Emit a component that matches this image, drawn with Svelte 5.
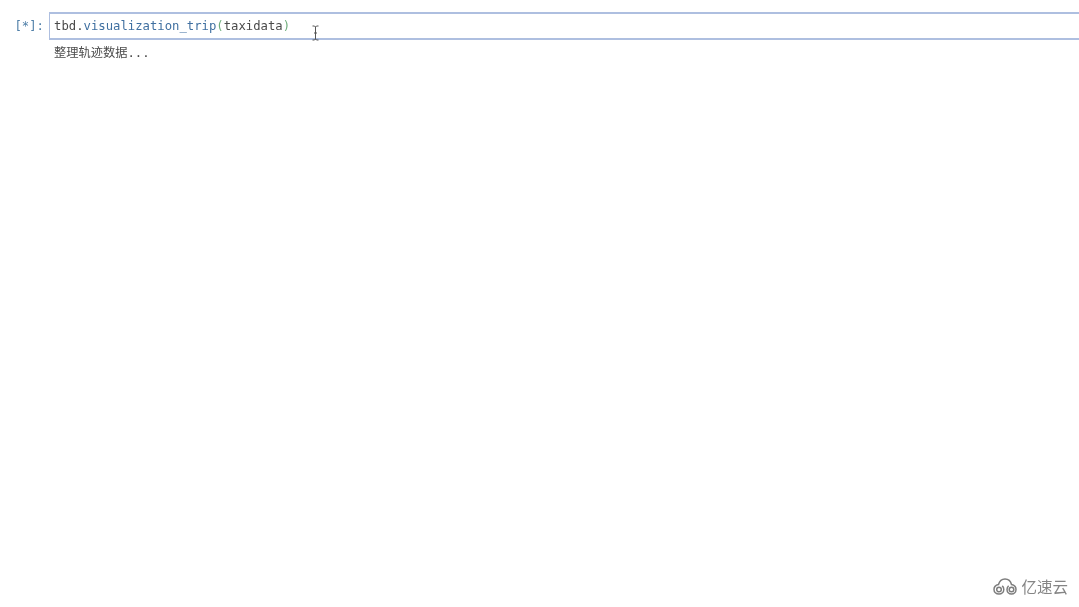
<script>
  const output = '整理轨迹数据...';
</script>

<div class="page">
  <div class="cell">
    <div class="prompt">[*]:</div>
    <div class="input">
      <code><span class="plain">tbd</span><span class="plain">.</span><span class="fn">visualization_trip</span><span class="paren">(</span><span class="plain">taxidata</span><span class="paren">)</span></code>
      <svg class="cursor" width="9" height="16" viewBox="0 0 9 16" aria-hidden="true">
        <path d="M1.5 1h2l1 1 1-1h2M4.5 2v12M1.5 15h2l1-1 1 1h2M3 8h3" fill="none" stroke="#555" stroke-width="1"/>
      </svg>
    </div>
  </div>
  <div class="output">{output}</div>

  <footer class="mark">
    <svg width="24" height="17" viewBox="0 0 24 17" aria-hidden="true">
      <g fill="none" stroke="#7d7d7d" stroke-width="1.500">
        <path d="M6 16C3 16 1 14 1 11.500 1 9 3 7 5.500 6.500 6.500 3 9 1 12 1c3.500 0 5.800 2.500 6.500 5.500 2.500.5 4.500 2.500 4.500 5 0 2.500-2 4.500-4.500 4.500-2.600 0-4.500-2-4.500-4.500 0-1.500.6-2.800 1.600-3.700"/>
        <path d="M6 16c2.700 0 4.800-2 4.800-4.500 0-1.400-.6-2.700-1.600-3.600"/>
        <circle cx="6" cy="11.500" r="2.300"/>
        <circle cx="18.500" cy="11.500" r="2.300"/>
      </g>
    </svg>
    <span>亿速云</span>
  </footer>
</div>

<style>
  :global(body) {
    margin: 0;
    background: #fff;
  }
  .page {
    position: relative;
    box-sizing: border-box;
    width: 1079px;
    height: 607px;
    padding-top: 12px;
    overflow: hidden;
    background: #fff;
    filter: blur(0.4px);
  }
  .cell {
    display: flex;
    align-items: stretch;
    margin-right: -2px;
  }
  .prompt {
    box-sizing: border-box;
    width: 49px;
    padding: 7px 5px 0 0;
    text-align: right;
    font: 12.25px/14px "DejaVu Sans Mono", monospace;
    color: #4f7fa8;
  }
  .input {
    position: relative;
    flex: 1;
    box-sizing: border-box;
    height: 28px;
    padding: 5px 0 0 4px;
    border: 2px solid #aebfe0;
    border-right-width: 1px;
    border-left-width: 1px;
  }
  code {
    display: block;
    font: 12.25px/14px "DejaVu Sans Mono", monospace;
    white-space: pre;
  }
  .plain { color: #4a4a4a; }
  .fn { color: #3f6fa0; }
  .paren { color: #6fae7c; }
  .cursor {
    position: absolute;
    left: 261px;
    top: 11px;
  }
  .output {
    margin: 6px 0 0 54px;
    font: 12.25px/14px "DejaVu Sans Mono", "Noto Sans CJK SC", monospace;
    color: #4a4a4a;
  }
  .mark {
    position: absolute;
    right: 11px;
    bottom: 11px;
    display: flex;
    align-items: center;
    gap: 4px;
    font: 15.5px/20px "Noto Sans CJK SC", sans-serif;
    color: #858585;
  }
</style>
